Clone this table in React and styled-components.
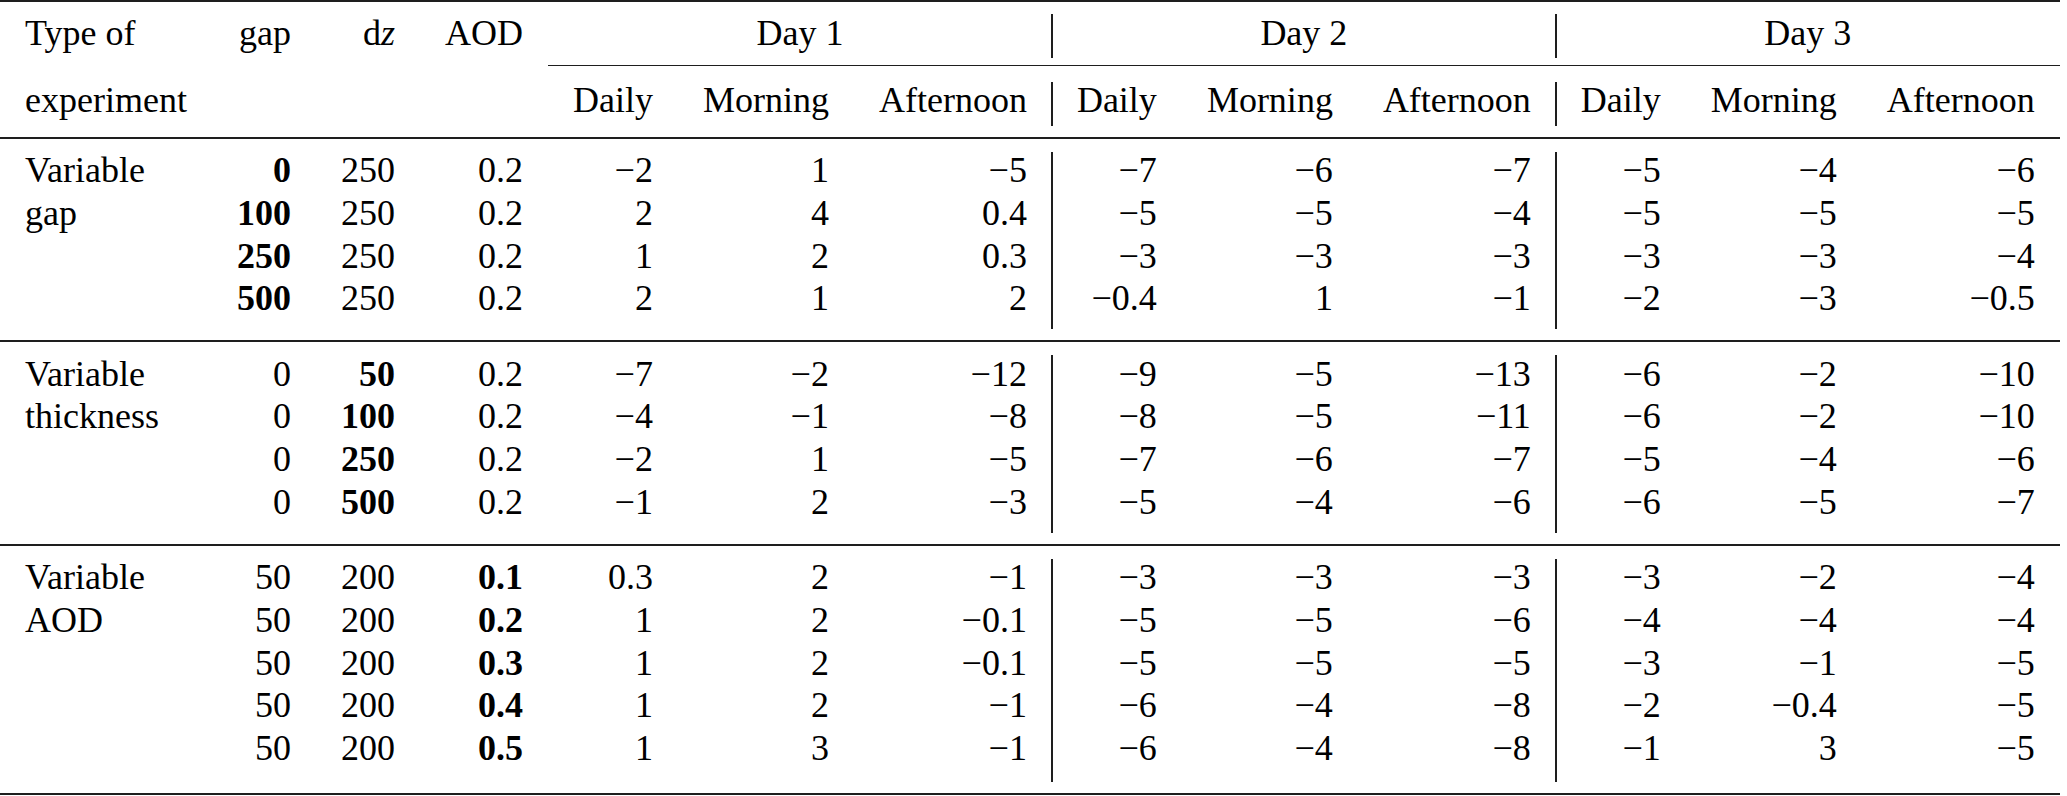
import React from 'react';
import styled, { createGlobalStyle, css } from 'styled-components';

const RULE = '#1e1e1e';

const GlobalStyle = createGlobalStyle`
  html, body { margin: 0; padding: 0; background: #fff; }
  body { font-family: "Liberation Serif", "Times New Roman", serif; color: #000; }
`;

const Table = styled.table`
  border-collapse: separate;
  border-spacing: 0;
  border-top: 2px solid ${RULE};
  border-bottom: 2px solid ${RULE};
  font-family: "Liberation Serif", "Times New Roman", serif;
  font-size: 36px;
  line-height: 42.75px;
  white-space: nowrap;
  color: #000;
`;

const divider = css`
  &::before {
    content: '';
    position: absolute;
    left: -0.75px;
    width: 1.5px;
    top: ${(p) => p.$lineTop}px;
    bottom: ${(p) => p.$lineBottom}px;
    background: ${RULE};
  }
`;

const HeadCell = styled.th`
  position: relative;
  font-weight: 400;
  padding: ${(p) => (p.$row === 1 ? '9.5px 25px 10.25px' : '13px 25px 15.25px')};
  text-align: ${(p) => p.$align || 'right'};
  border-top: ${(p) =>
    p.$row === 2 ? `1.5px solid ${p.$rule ? RULE : 'transparent'}` : 'none'};
  ${(p) => p.$divider && divider}
`;

const Cell = styled.td`
  position: relative;
  padding: ${(p) => (p.$first ? 10.5 : 0)}px 25px ${(p) => (p.$last ? p.$padBottom : 0)}px;
  border-top: ${(p) => (p.$first ? `2px solid ${RULE}` : 'none')};
  text-align: ${(p) => (p.$left ? 'left' : 'right')};
  font-weight: ${(p) => (p.$bold ? 700 : 400)};
  ${(p) => p.$divider && divider}
`;

const Italic = styled.i`
  font-style: italic;
`;

const groups = [
  {
    label: ['Variable', 'gap'],
    bold: 1,
    padBottom: 20,
    rows: [
      ['0', '250', '0.2', '−2', '1', '−5', '−7', '−6', '−7', '−5', '−4', '−6'],
      ['100', '250', '0.2', '2', '4', '0.4', '−5', '−5', '−4', '−5', '−5', '−5'],
      ['250', '250', '0.2', '1', '2', '0.3', '−3', '−3', '−3', '−3', '−3', '−4'],
      ['500', '250', '0.2', '2', '1', '2', '−0.4', '1', '−1', '−2', '−3', '−0.5'],
    ],
  },
  {
    label: ['Variable', 'thickness'],
    bold: 2,
    padBottom: 20,
    rows: [
      ['0', '50', '0.2', '−7', '−2', '−12', '−9', '−5', '−13', '−6', '−2', '−10'],
      ['0', '100', '0.2', '−4', '−1', '−8', '−8', '−5', '−11', '−6', '−2', '−10'],
      ['0', '250', '0.2', '−2', '1', '−5', '−7', '−6', '−7', '−5', '−4', '−6'],
      ['0', '500', '0.2', '−1', '2', '−3', '−5', '−4', '−6', '−6', '−5', '−7'],
    ],
  },
  {
    label: ['Variable', 'AOD'],
    bold: 3,
    padBottom: 23.5,
    rows: [
      ['50', '200', '0.1', '0.3', '2', '−1', '−3', '−3', '−3', '−3', '−2', '−4'],
      ['50', '200', '0.2', '1', '2', '−0.1', '−5', '−5', '−6', '−4', '−4', '−4'],
      ['50', '200', '0.3', '1', '2', '−0.1', '−5', '−5', '−5', '−3', '−1', '−5'],
      ['50', '200', '0.4', '1', '2', '−1', '−6', '−4', '−8', '−2', '−0.4', '−5'],
      ['50', '200', '0.5', '1', '3', '−1', '−6', '−4', '−8', '−1', '3', '−5'],
    ],
  },
];

const periods = ['Daily', 'Morning', 'Afternoon'];
const days = ['Day 1', 'Day 2', 'Day 3'];

function Group({ group }) {
  const n = group.rows.length;
  return (
    <tbody>
      {group.rows.map((row, r) => {
        const first = r === 0;
        const last = r === n - 1;
        const common = {
          $first: first,
          $last: last,
          $padBottom: group.padBottom,
          $lineTop: first ? 13 : 0,
          $lineBottom: last ? 11 : 0,
        };
        return (
          <tr key={r}>
            <Cell {...common} $left>
              {group.label[r] || ''}
            </Cell>
            {row.map((v, c) => {
              const col = c + 1;
              return (
                <Cell
                  key={c}
                  {...common}
                  $bold={col === group.bold}
                  $divider={col === 7 || col === 10}
                >
                  {v}
                </Cell>
              );
            })}
          </tr>
        );
      })}
    </tbody>
  );
}

export default function App() {
  return (
    <>
      <GlobalStyle />
      <Table>
        <thead>
          <tr>
            <HeadCell $row={1} $align="left">
              Type of
            </HeadCell>
            <HeadCell $row={1}>gap</HeadCell>
            <HeadCell $row={1}>
              d<Italic>z</Italic>
            </HeadCell>
            <HeadCell $row={1}>AOD</HeadCell>
            {days.map((d, i) => (
              <HeadCell
                key={d}
                $row={1}
                colSpan={3}
                $align="center"
                $divider={i > 0}
                $lineTop={12}
                $lineBottom={6.5}
              >
                {d}
              </HeadCell>
            ))}
          </tr>
          <tr>
            <HeadCell $row={2} $align="left">
              experiment
            </HeadCell>
            <HeadCell $row={2} />
            <HeadCell $row={2} />
            <HeadCell $row={2} />
            {days.map((d, i) =>
              periods.map((p, j) => (
                <HeadCell
                  key={d + p}
                  $row={2}
                  $rule
                  $divider={i > 0 && j === 0}
                  $lineTop={16}
                  $lineBottom={11}
                >
                  {p}
                </HeadCell>
              ))
            )}
          </tr>
        </thead>
        {groups.map((g, i) => (
          <Group key={i} group={g} />
        ))}
      </Table>
    </>
  );
}
